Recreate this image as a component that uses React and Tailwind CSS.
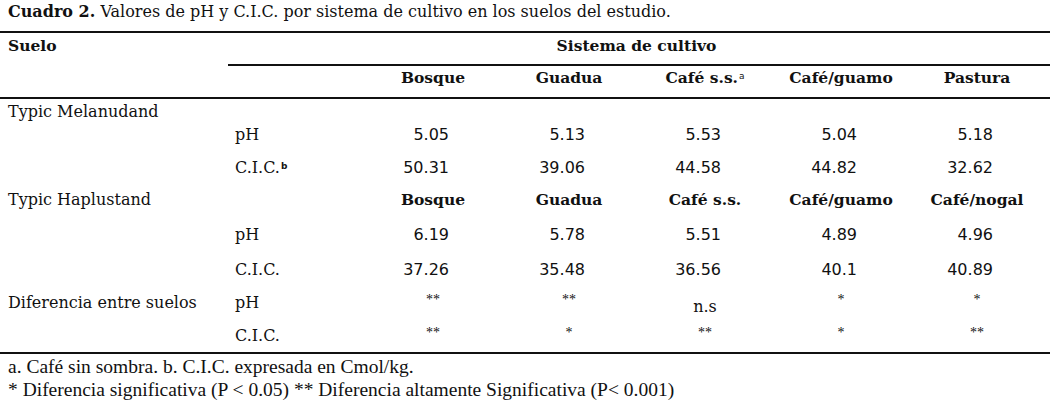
import React from "react";

const serif = "font-['DejaVu_Serif',serif]";
const sans = "font-['DejaVu_Sans',sans-serif]";

const cols1 = ["Bosque", "Guadua", "Café s.s.", "Café/guamo", "Pastura"];
const cols2 = ["Bosque", "Guadua", "Café s.s.", "Café/guamo", "Café/nogal"];

const NumCells = ({ values }) =>
    values.map((v, i) => (
        <div key={i} className={`w-[136px] text-right pr-[52px] ${sans} text-[16px]`}>
            {v}
        </div>
    ));

const StarCells = ({ values }) =>
    values.map((v, i) => (
        <div
            key={i}
            className={`w-[136px] text-center ${v === "n.s" ? "pt-[4px]" : "font-['Liberation_Serif',serif] text-[14px] -translate-y-[3px]"}`}
        >
            {v}
        </div>
    ));

const HeadCells = ({ values, sup }) =>
    values.map((v, i) => (
        <div key={i} className="w-[136px] text-center font-bold text-[15.5px]">
            {v}
            {sup && i === 2 && <sup className={`${sans} text-[9px] font-normal ml-[1px]`}>a</sup>}
        </div>
    ));

const Row = ({ className, label, sub, children }) => (
    <div className={`flex leading-[20px] ${className}`}>
        <div className="w-[228px] pl-[8px]">{label}</div>
        <div className="w-[137px] pl-[7px]">{sub}</div>
        {children}
    </div>
);

export default function App() {
    return (
        <div className={`w-[1050px] h-[405px] bg-white text-[#111] ${serif} text-[16px] overflow-hidden`}>
            {/* caption */}
            <div className="h-[31px] pl-[8px] leading-[24px]">
                <span className="font-bold">Cuadro 2.</span> Valores de pH y C.I.C. por sistema de cultivo en los suelos del estudio.
            </div>
            <div className="h-[2px] bg-[#111]" />

            {/* header */}
            <div className="flex h-[31px] leading-[26px] font-bold text-[15.5px]">
                <div className="w-[228px] pl-[8px]">Suelo</div>
                <div className="w-[817px] text-center">Sistema de cultivo</div>
            </div>
            <div className="flex">
                <div className="w-[228px]" />
                <div className="flex-1 h-[2px] bg-[#111]" />
            </div>
            <div className="flex h-[31px] leading-[24px]">
                <div className="w-[365px]" />
                <HeadCells values={cols1} sup />
            </div>
            <div className="h-[2px] bg-[#111]" />

            {/* body */}
            <Row className="h-[24px] pt-[3px]" label="Typic Melanudand" />
            <Row className="h-[28px] pt-[2px]" sub="pH">
                <NumCells values={["5.05", "5.13", "5.53", "5.04", "5.18"]} />
            </Row>
            <Row
                className="h-[33px] pt-[7px]"
                sub={
                    <>
                        C.I.C.<sup className={`${sans} text-[9px] font-bold ml-[1px]`}>b</sup>
                    </>
                }
            >
                <NumCells values={["50.31", "39.06", "44.58", "44.82", "32.62"]} />
            </Row>
            <Row className="h-[34px] pt-[6px]" label="Typic Haplustand">
                <HeadCells values={cols2} />
            </Row>
            <Row className="h-[35px] pt-[7px]" sub="pH">
                <NumCells values={["6.19", "5.78", "5.51", "4.89", "4.96"]} />
            </Row>
            <Row className="h-[34px] pt-[7px]" sub="C.I.C.">
                <NumCells values={["37.26", "35.48", "36.56", "40.1", "40.89"]} />
            </Row>
            <Row className="h-[33px] pt-[6px]" label="Diferencia entre suelos" sub="pH">
                <StarCells values={["**", "**", "n.s", "*", "*"]} />
            </Row>
            <Row className="h-[32px] pt-[6px]" sub="C.I.C.">
                <StarCells values={["**", "*", "**", "*", "**"]} />
            </Row>
            <div className="h-[2px] bg-[#111]" />

            {/* footnotes */}
            <div className="font-['Liberation_Serif',serif] text-[19.5px] leading-[23px] pl-[8px] pt-[1px]">
                <div>a. Café sin sombra. b. C.I.C. expresada en Cmol/kg.</div>
                <div>* Diferencia significativa (P &lt; 0.05) ** Diferencia altamente Significativa (P&lt; 0.001)</div>
            </div>
        </div>
    );
}
